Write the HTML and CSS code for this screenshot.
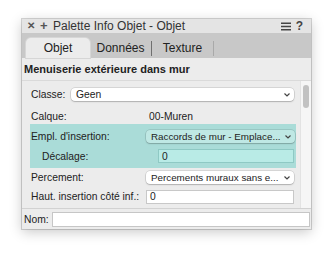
FILE: index.html
```html
<!DOCTYPE html>
<html>
<head>
<meta charset="utf-8">
<link rel="stylesheet" href="styles.css">
</head>
<body>
<div class="window">
  <div class="titlebar">
    <span class="tb-icon close">✕</span>
    <span class="tb-icon plus">+</span>
    <span class="title">Palette Info Objet - Objet</span>
    <span class="tb-right">
      <svg class="menu-icon" width="10" height="9" viewBox="0 0 10 9"><rect x="0" y="0.5" width="10" height="1.5" fill="#444"/><rect x="0" y="3.75" width="10" height="1.5" fill="#444"/><rect x="0" y="7" width="10" height="1.5" fill="#444"/></svg>
      <span class="help">?</span>
    </span>
  </div>
  <div class="tabbar">
    <div class="tab active">Objet</div>
    <div class="tab">Données</div>
    <div class="sep"></div>
    <div class="tab">Texture</div>
    <div class="sep light"></div>
  </div>
  <div class="content">
    <div class="heading">Menuiserie extérieure dans mur</div>
    <div class="scrollarea">
      <div class="rows">
        <div class="row row-classe">
          <span class="label label-short">Classe:</span>
          <div class="select"><span class="sel-text">Geen</span><svg class="chev" width="6" height="4" viewBox="0 0 6 4"><path d="M0.5 0.5 L3 3 L5.5 0.5" fill="none" stroke="#444" stroke-width="1.2"/></svg></div>
        </div>
        <div class="row row-calque">
          <span class="label">Calque:</span>
          <span class="value">00-Muren</span>
        </div>
        <div class="highlight">
          <div class="row">
            <span class="label">Empl. d'insertion:</span>
            <div class="select teal"><span class="sel-text">Raccords de mur - Emplace...</span><svg class="chev" width="6" height="4" viewBox="0 0 6 4"><path d="M0.5 0.5 L3 3 L5.5 0.5" fill="none" stroke="#444" stroke-width="1.2"/></svg></div>
          </div>
          <div class="row">
            <span class="label indent">Décalage:</span>
            <div class="input teal-input">0</div>
          </div>
        </div>
        <div class="row row-perc">
          <span class="label">Percement:</span>
          <div class="select"><span class="sel-text">Percements muraux sans e...</span><svg class="chev" width="6" height="4" viewBox="0 0 6 4"><path d="M0.5 0.5 L3 3 L5.5 0.5" fill="none" stroke="#444" stroke-width="1.2"/></svg></div>
        </div>
        <div class="row row-haut">
          <span class="label">Haut. insertion côté inf.:</span>
          <div class="input">0</div>
        </div>
      </div>
      <div class="scrollbar"><div class="thumb"></div></div>
    </div>
    <div class="nomrow">
      <span class="nomlabel">Nom:</span>
      <div class="nominput"></div>
    </div>
  </div>
</div>
</body>
</html>
```

FILE: styles.css
```css
* { box-sizing: border-box; }
html, body { margin: 0; padding: 0; background: #ffffff; }
body {
  width: 333px;
  height: 255px;
  overflow: hidden;
  font-family: "Liberation Sans", Arial, sans-serif;
  color: #222;
}
.window {
  margin: 19px 0 0 22px;
  width: 289px;
  height: 210px;
  display: flex;
  flex-direction: column;
  background: #ececec;
  box-shadow: 0 0 0 1px rgba(0,0,0,0.16), 0 3px 12px rgba(0,0,0,0.22);
  overflow: hidden;
}
.titlebar {
  height: 14px;
  background: #e4e4e4;
  display: flex;
  align-items: center;
  font-size: 12px;
  color: #333;
  padding-left: 4px;
  line-height: 14px;
}
.tb-icon { font-weight: bold; color: #555; }
.close { font-size: 10px; width: 11px; margin-left: 1px; }
.plus { font-size: 13px; width: 11px; margin-left: 2px; }
.title { margin-left: 2px; }
.tb-right { margin-left: auto; display: flex; align-items: center; gap: 5px; padding-right: 8px; }
.help { font-weight: bold; font-size: 12px; color: #444; }
.tabbar {
  height: 25px;
  background: #c8c8c8;
  display: flex;
  align-items: flex-end;
  padding-left: 4px;
}
.tab {
  width: 61px;
  height: 20px;
  font-size: 12px;
  display: flex;
  align-items: center;
  justify-content: center;
  color: #222;
  padding-bottom: 1px;
}
.tab.active {
  width: 64px;
  background: #ececec;
  border-radius: 5px 5px 0 0;
  box-shadow: 0 0 0 1px #d6d6d6;
}
.sep {
  width: 1px;
  height: 15px;
  background: #707070;
  margin-bottom: 2px;
}
.sep.light { background: #a9a9a9; }
.content { flex: 1; display: flex; flex-direction: column; min-height: 0; }
.heading {
  height: 23px;
  font-size: 11px;
  font-weight: bold;
  padding-left: 2px;
  display: flex;
  align-items: center;
  border-bottom: 1px solid #dadada;
}
.scrollarea {
  flex: 1;
  display: flex;
  border-bottom: 1px solid #d2d2d2;
  min-height: 0;
}
.rows { flex: 1; min-width: 0; padding: 2px 5px 0 8px; }
.row {
  height: 20px;
  display: flex;
  align-items: center;
  font-size: 10.3px;
  white-space: nowrap;
}
.row-classe { height: 22px; }
.row-calque { height: 19px; padding-top: 3px; }
.row-perc { height: 18px; }
.row-haut { height: 21px; }
.label { width: 116px; flex: none; padding-left: 1px; color: #222; }
.label-short { width: 41px; }
.label.indent { width: 128px; padding-left: 12px; }
.value { margin-left: 3px; }
.select {
  flex: 1;
  min-width: 0;
  height: 13px;
  background: #ffffff;
  border-radius: 4px;
  box-shadow: 0 0 0 0.5px rgba(0,0,0,0.18), 0 1px 1.5px rgba(0,0,0,0.18);
  display: flex;
  align-items: center;
  padding: 0 4px 0 5px;
  font-size: 9.8px;
  margin-right: 1px;
}
.sel-text { flex: 1; min-width: 0; white-space: nowrap; overflow: hidden; }
.row-classe .sel-text { font-size: 10.3px; }
.chev { margin-top: 1px; margin-left: 2px; flex: none; }
.select.teal { background: #bfe8e4; }
.highlight {
  background: #aadcd8;
  padding: 2px 0;
  margin-right: -1px;
}
.input {
  flex: 1;
  min-width: 0;
  height: 14px;
  background: #ffffff;
  border: 1px solid #c8c8c8;
  display: flex;
  align-items: center;
  padding-left: 3px;
  font-size: 10.3px;
  margin-right: 1px;
}
.teal-input { background: #b9ebe6; border-color: #8fc9c4; margin-right: 2px; }
.scrollbar {
  width: 11px;
  flex: none;
  background: #f6f6f6;
  border-left: 1px solid #e3e3e3;
  padding: 4px 0 0 2px;
}
.thumb {
  width: 6px;
  height: 23px;
  background: #c2c2c2;
  border-radius: 3px;
}
.nomrow {
  height: 20px;
  display: flex;
  align-items: center;
  font-size: 10.3px;
  padding: 0 1px 0 2px;
}
.nomlabel { width: 28px; }
.nominput {
  flex: 1;
  height: 15px;
  background: #ffffff;
  border: 1px solid #c6c6c6;
}
```
